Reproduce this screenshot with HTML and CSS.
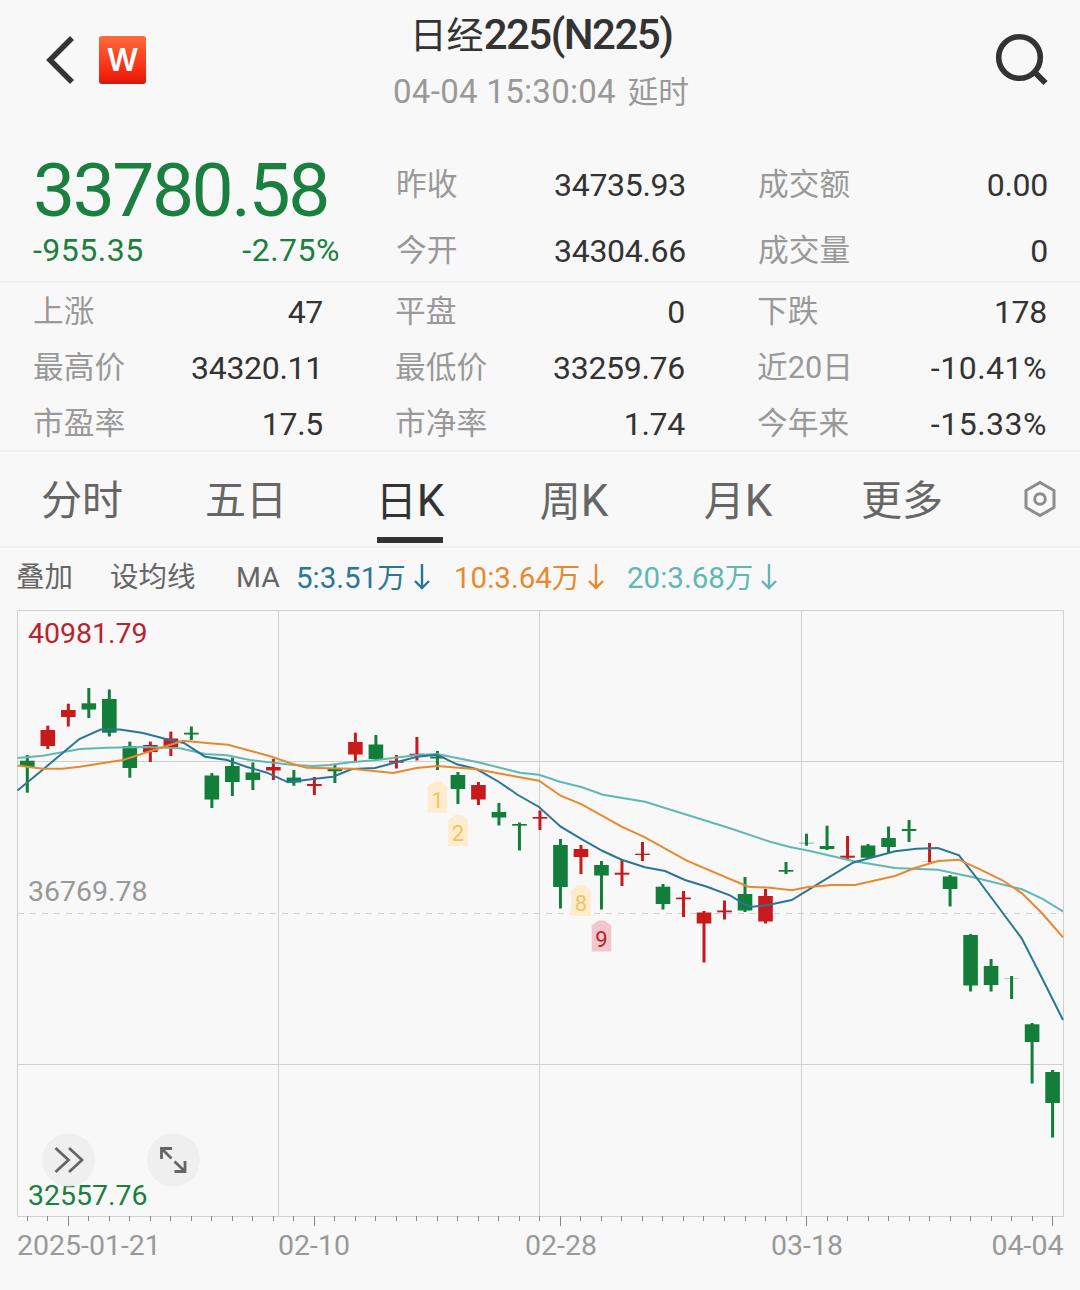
FILE: index.html
```html
<!DOCTYPE html>
<html lang="zh-CN">

<head>
    <meta charset="UTF-8">
    <title>日经225(N225)</title>
    <link rel="stylesheet" href="styles.css">
</head>

<body>
    <header class="header">
        <div class="header-left">
            <svg class="back" width="28" height="48" viewBox="0 0 28 48">
                <path d="M26 2 L4 24 L26 46" fill="none" stroke="#333" stroke-width="5.5" />
            </svg>
            <div class="logo">W</div>
        </div>
        <div class="header-title">
            <h1>日经<b>225(N225)</b></h1>
            <p><span class="num">04-04 15:30:04</span> 延时</p>
        </div>
        <svg class="search" width="54" height="54" viewBox="0 0 54 54">
            <circle cx="24.5" cy="24.5" r="20.8" fill="none" stroke="#333" stroke-width="5.6" />
            <path d="M39 38.5 L50.5 50" stroke="#333" stroke-width="6" />
        </svg>
    </header>

    <section class="quote">
        <div class="price">
            <div class="last">33780.58</div>
            <div class="change"><span>-955.35</span><span>-2.75%</span></div>
        </div>
        <dl class="stats top">
            <div><dt>昨收</dt><dd>34735.93</dd></div>
            <div><dt>成交额</dt><dd>0.00</dd></div>
            <div><dt>今开</dt><dd>34304.66</dd></div>
            <div><dt>成交量</dt><dd>0</dd></div>
        </dl>
    </section>

    <dl class="stats more">
        <div><dt>上涨</dt><dd>47</dd></div>
        <div><dt>平盘</dt><dd>0</dd></div>
        <div><dt>下跌</dt><dd>178</dd></div>
        <div><dt>最高价</dt><dd>34320.11</dd></div>
        <div><dt>最低价</dt><dd>33259.76</dd></div>
        <div><dt>近<span class="num">20</span>日</dt><dd class="neg">-10.41%</dd></div>
        <div><dt>市盈率</dt><dd>17.5</dd></div>
        <div><dt>市净率</dt><dd>1.74</dd></div>
        <div><dt>今年来</dt><dd class="neg">-15.33%</dd></div>
    </dl>

    <nav class="tabs">
        <a>分时</a>
        <a>五日</a>
        <a class="active">日<i>K</i></a>
        <a>周<i>K</i></a>
        <a>月<i>K</i></a>
        <a>更多</a>
        <svg class="settings" width="34" height="38" viewBox="0 0 34 38">
            <path d="M17 2.5 L31 10.5 V27.5 L17 35.5 L3 27.5 V10.5 Z" fill="none" stroke="#8c8c8c" stroke-width="3" />
            <circle cx="17" cy="19" r="5.3" fill="none" stroke="#8c8c8c" stroke-width="3" />
        </svg>
    </nav>

    <div class="legend">
        <span>叠加</span>
        <span>设均线</span>
        <span class="ma">MA</span>
        <span class="ma5"><em>5:3.51</em>万<svg width="16" height="28" viewBox="0 0 16 28"><path d="M8 1 V25 M1 18 L8 25 L15 18" /></svg></span>
        <span class="ma10"><em>10:3.64</em>万<svg width="16" height="28" viewBox="0 0 16 28"><path d="M8 1 V25 M1 18 L8 25 L15 18" /></svg></span>
        <span class="ma20"><em>20:3.68</em>万<svg width="16" height="28" viewBox="0 0 16 28"><path d="M8 1 V25 M1 18 L8 25 L15 18" /></svg></span>
    </div>

    <svg class="chart" width="1080" height="690" viewBox="0 600 1080 690">
        <g class="grid">
            <path d="M17.5 610.5 H1063.5 V1216.5 H17.5 Z" />
            <path d="M278.5 610 V1216 M539.5 610 V1216 M801.5 610 V1216" />
            <path d="M18 761.5 H1063 M18 1064.5 H1063" />
            <path class="middle" d="M18 913.5 H1063" />
        </g>
        <g id="candles"></g>
        <g class="lines">
            <polyline class="line20" points="17.5,758 43,755.7 80,749 107,747.7 143,747 180,748.3 205,754 227,755.3 250,760 293,765 313,766 330,765 350,762.3 377,760 417,755 437,754 477,762 520,772.7 539,774.7 560,781.7 582,787.3 603,794.7 645,801.7 730,828.3 770,841.7 790,847 810,851 853,861 895,868 938,869.7 973,877.3 1022,889.3 1042,898.7 1063,911.3" />
            <polyline class="line5" points="17.5,790.5 43,769.5 79.3,739 100.7,729.5 120,729.5 143,733 165,738.7 184,743 205,756.7 227,760 247,767 267,772.7 288,782.3 313,779 333,776.7 352,769 375,768 417,756.7 437,754.7 457,764.3 477,769.3 499,782 518,795 539,807 560.7,826.7 582,839.3 602.7,851 621.7,859.7 645,867.3 665,871 685,880 707,886.7 730,895.3 746,905 752,906.7 768,905 791.7,900 826.7,878.7 853,862.7 860,860.7 895,851.3 916.7,848.7 938,848 959,855.3 976.7,878 1021.7,938.3 1043,980 1063,1020" />
            <polyline class="line10" points="17.5,765.5 43,768.7 62,768.7 80,766.7 108,762.3 123,760 147,752.3 183,740.7 207,743 228,744.7 250,750.7 270,756.3 293,764 306.7,767.7 352,768.7 393,773 416.7,768 437,766 477,769.3 513,776 539,780.7 560.7,795.7 581.7,804.3 621.7,826.7 645,837.3 686.7,860.7 748.3,886.7 770,887.7 792,890.2 806.7,887.3 831.7,885 855,885 895,876 915,868 938,861 959,859.7 980,869.3 1002,880 1022,893.3 1042,913.3 1063,937.3" />
        </g>
        <g id="signals"></g>
        <text class="high" x="28" y="643">40981.79</text>
        <text class="mid" x="28" y="901">36769.78</text>
        <text class="low" x="28" y="1204.5">32557.76</text>
        <g class="tools">
            <circle cx="68.5" cy="1160" r="26.5" />
            <path d="M55.5 1148 L68.5 1160 L55.5 1172 M69 1148 L82 1160 L69 1172" />
            <circle cx="173.5" cy="1160" r="26.5" />
            <path d="M161.5 1159 V1148.5 H172 M162 1149 L171.5 1158.5 M185 1161 V1171.5 H174.5 M184.5 1171 L174.5 1161.5" />
        </g>
        <g id="ticks"></g>
        <text class="date" x="17" y="1254.5">2025-01-21</text>
        <text class="date center" x="314" y="1254.5">02-10</text>
        <text class="date center" x="561" y="1254.5">02-28</text>
        <text class="date center" x="807" y="1254.5">03-18</text>
        <text class="date end" x="1063.5" y="1254.5">04-04</text>
    </svg>

    <script>
        // [dirección, máximo, mínimo, inicio del cuerpo, fin del cuerpo]
        const candles = [
            ['down', 755, 792.7, 760.7, 767],
            ['up', 725.7, 749, 730, 746],
            ['up', 703.7, 726.5, 710, 717],
            ['down', 688, 718, 703.3, 709.5],
            ['down', 689.5, 736.5, 699, 732.7],
            ['down', 741.6, 777.7, 746, 768],
            ['up', 741.6, 762, 745, 752],
            ['up', 731.6, 756, 738.5, 747],
            ['down', 726.5, 740, 732.7, 734.5],
            ['down', 773, 808, 775.5, 799.5],
            ['down', 757.5, 796, 766, 782],
            ['down', 762.5, 790, 772.5, 780],
            ['up', 759, 780, 767, 770.5],
            ['down', 770, 785.7, 777.6, 782.5],
            ['up', 777, 795, 784, 786],
            ['down', 764, 783, 769, 771.3],
            ['up', 732.7, 762.5, 742, 754.5],
            ['down', 735, 761, 744.5, 759],
            ['up', 755, 768.5, 760.7, 762.7],
            ['up', 737, 760.5, 753.7, 755.5],
            ['down', 751, 770, 756.5, 758.5],
            ['down', 772, 804, 775, 789],
            ['up', 782, 805, 785, 799.5],
            ['down', 803, 825.5, 812, 817.5],
            ['down', 822.5, 850.5, 824, 825.7],
            ['up', 810.5, 830, 817, 818.7],
            ['down', 839, 908.5, 845, 887],
            ['up', 845, 874, 849, 857],
            ['down', 861, 909.5, 865, 875.5],
            ['up', 860, 886, 872.7, 874.7],
            ['up', 842, 861, 853.7, 855],
            ['down', 884, 909.5, 886.7, 904],
            ['up', 891, 917, 897.5, 899.3],
            ['up', 911, 962.5, 912.5, 923.5],
            ['up', 900.5, 919.5, 910.5, 912.3],
            ['down', 877, 912, 894, 910.5],
            ['up', 889, 923.5, 896, 921.5],
            ['down', 862, 874, 870, 871.7],
            ['down', 833.7, 845.7, 842.8, 843.3],
            ['down', 825.7, 850, 846, 849],
            ['up', 836, 859, 855.7, 857.7],
            ['down', 844, 858.5, 845.5, 857.7],
            ['down', 826.5, 853, 838, 847],
            ['down', 820, 842, 829, 831],
            ['up', 843, 862.5, 861.8, 862],
            ['down', 875, 906.5, 876.5, 889],
            ['down', 934, 991.5, 935, 985.5],
            ['down', 959, 991.5, 966, 985],
            ['down', 976, 999, 978.7, 979],
            ['down', 1023, 1083.5, 1024.3, 1042],
            ['down', 1070, 1137.5, 1072, 1103]
        ];

        // [número, índice de la vela, punta superior, clase]
        const signals = [
            [1, 20, 781.5, 'soft'],
            [2, 21, 815, 'soft'],
            [8, 27, 885, 'soft'],
            [9, 28, 920.5, 'strong']
        ];

        const step = 20.506;
        const firstX = 27.3;

        let candleHtml = '';
        let tickHtml = '';
        candles.forEach(([dir, high, low, top, bottom], i) => {
            const x = firstX + i * step;
            candleHtml += `<g class="${dir}">
                <rect x="${x - 1.5}" y="${high}" width="3" height="${low - high}" />
                <rect x="${x - 7.3}" y="${top}" width="14.6" height="${bottom - top}" />
            </g>`;
            // cada 12 velas una marca larga
            const size = i % 12 === 2 ? 10 : 5;
            const tx = Math.floor(x) + 0.5;
            tickHtml += `<path d="M${tx} 1216 v${size}" />`;
        });
        document.getElementById('candles').innerHTML = candleHtml;
        document.getElementById('ticks').innerHTML = tickHtml;

        let signalHtml = '';
        signals.forEach(([n, i, y, cls]) => {
            const x = firstX + i * step;
            signalHtml += `<g class="${cls}">
                <path d="M${x - 9.8} ${y + 5} L${x - 3} ${y} H${x + 3} L${x + 9.8} ${y + 5} V${y + 31} H${x - 9.8} Z" />
                <text x="${x}" y="${y + 26}">${n}</text>
            </g>`;
        });
        document.getElementById('signals').innerHTML = signalHtml;
    </script>
</body>

</html>
```

FILE: styles.css
```css
* {
    box-sizing: border-box;
}

body {
    margin: 0;
    width: 1080px;
    height: 1290px;
    overflow: hidden;
    background-color: #f8f8f8;
    font-family: Roboto, "Noto Sans CJK SC", sans-serif;
    color: #333;
}

h1, p, dl, dd {
    margin: 0;
}

.header {
    display: grid;
    grid-template-columns: 200px 1fr 200px;
    height: 151px;
    padding: 0 31px 0 33px;
}

.header-left {
    display: flex;
    gap: 25px;
    padding: 36px 0 0 13px;
}

.logo {
    width: 47px;
    height: 48px;
    border-radius: 3px;
    background: linear-gradient(#fd6a3c, #f5200c 85%, #c81c10);
    color: #fff;
    font-family: Inter, sans-serif;
    font-size: 31px;
    font-weight: 600;
    line-height: 48px;
    text-align: center;
}

.header-title {
    text-align: center;
    white-space: nowrap;
}

h1 {
    height: 64px;
    padding-top: 5px;
    font-size: 37px;
    font-weight: 400;
    line-height: 60px;
}

h1 b {
    font-size: 42px;
    font-weight: 500;
    letter-spacing: -1.5px;
}

.header-title p {
    color: #999;
    font-size: 30.7px;
    line-height: 56px;
}

.header-title .num {
    margin-right: 4px;
    font-size: 33px;
    letter-spacing: 0.3px;
}

.search {
    justify-self: end;
    margin-top: 33px;
}

.quote {
    display: flex;
    height: 132px;
    border-bottom: 2px solid #efefef;
}

.price {
    width: 396px;
    padding-left: 33px;
    color: #1b7f3f;
}

.last {
    height: 76px;
    font-size: 75px;
    letter-spacing: -2.5px;
    line-height: 78px;
}

.change {
    display: flex;
    justify-content: space-between;
    width: 307px;
    font-size: 32px;
    line-height: 46px;
    letter-spacing: 0.5px;
}

.stats {
    display: grid;
}

.stats div {
    display: flex;
    justify-content: space-between;
}

dt {
    color: #999;
    font-size: 30.7px;
}

dd {
    font-size: 32px;
    letter-spacing: -0.3px;
}

dd.neg {
    letter-spacing: 0.5px;
}

.top {
    grid-template-columns: 290px 290px;
    grid-auto-rows: 66px;
    column-gap: 72px;
    padding-top: 1px;
    line-height: 66px;
}

.more {
    grid-template-columns: 290px 290px 290px;
    grid-auto-rows: 56px;
    column-gap: 72px;
    height: 169px;
    padding: 1px 0 0 33px;
    border-bottom: 2px solid #efefef;
    line-height: 56px;
}

.tabs {
    display: flex;
    height: 96px;
    border-bottom: 2px solid #efefef;
}

.tabs a {
    width: 164px;
    color: #666;
    font-size: 41px;
    line-height: 98px;
    text-align: center;
    white-space: nowrap;
}

.tabs i {
    font-size: 44px;
    font-style: normal;
}

.tabs .active {
    color: #333;
    background: linear-gradient(#333, #333) 49px 85px / 66px 6px no-repeat;
}

.settings {
    margin: 28px 0 0 39px;
}

.legend {
    display: grid;
    grid-template-columns: 94px 126px 60px 158px 173px auto;
    height: 52px;
    padding-left: 16px;
    color: #666;
    font-size: 28.5px;
    line-height: 60px;
    white-space: nowrap;
}

.legend em {
    font-size: 29.5px;
    font-style: normal;
}

.legend svg {
    margin-left: 8px;
    vertical-align: -3px;
    fill: none;
    stroke: currentColor;
    stroke-width: 2.4;
}

.ma5 {
    color: #2b7599;
}

.ma10 {
    color: #e8892f;
}

.ma20 {
    color: #60b8b0;
}

.chart {
    display: block;
    font-size: 28.5px;
}

.grid path {
    fill: none;
    stroke: #d0d0d0;
}

.grid .middle {
    stroke-dasharray: 6 6;
}

.up {
    fill: #c8191d;
}

.down {
    fill: #137d3a;
}

.lines polyline {
    fill: none;
    stroke-width: 2;
}

.line5 {
    stroke: #2b7599;
}

.line10 {
    stroke: #e8892f;
}

.line20 {
    stroke: #60b8b0;
}

.high {
    fill: #b9242c;
}

.mid,
.date {
    fill: #999;
}

.low {
    fill: #1b7f3f;
}

.center {
    text-anchor: middle;
}

.end {
    text-anchor: end;
}

#signals text {
    font-size: 22px;
    text-anchor: middle;
}

.soft path {
    fill: #fdecce;
}

.soft text {
    fill: #f3c35f;
}

.strong path {
    fill: #f2c6ca;
}

.strong text {
    fill: #b9242c;
}

.tools circle {
    fill: #eee;
    fill-opacity: 0.92;
}

.tools path {
    fill: none;
    stroke: #666;
    stroke-width: 2.8;
}

#ticks path {
    stroke: #888;
}
```
